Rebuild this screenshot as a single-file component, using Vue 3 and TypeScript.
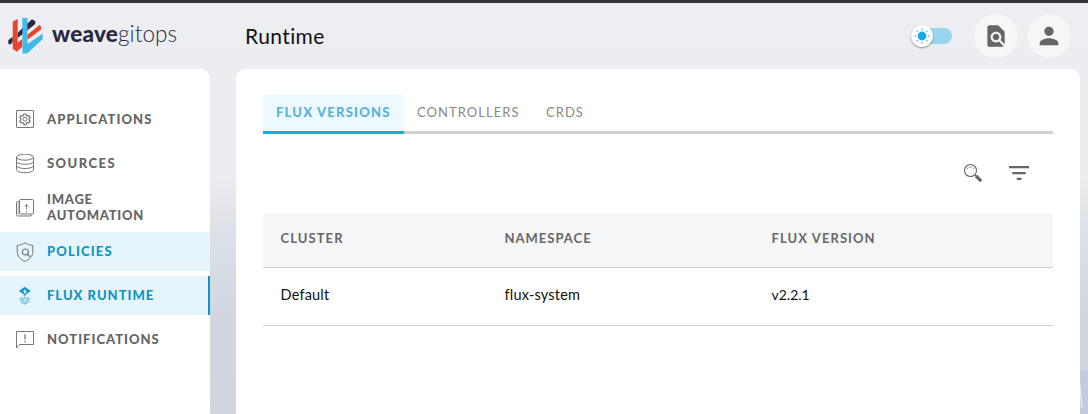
<script setup lang="ts">
interface NavItem {
  id: string
  label: string
  state?: 'hover' | 'active'
}

const navItems: NavItem[] = [
  { id: 'applications', label: 'APPLICATIONS' },
  { id: 'sources', label: 'SOURCES' },
  { id: 'image', label: 'IMAGE AUTOMATION' },
  { id: 'policies', label: 'POLICIES', state: 'hover' },
  { id: 'flux', label: 'FLUX RUNTIME', state: 'active' },
  { id: 'notifications', label: 'NOTIFICATIONS' },
]

const tabs = [
  { id: 'versions', label: 'FLUX VERSIONS', active: true },
  { id: 'controllers', label: 'CONTROLLERS', active: false },
  { id: 'crds', label: 'CRDS', active: false },
]

const columns = [
  { id: 'cluster', label: 'CLUSTER' },
  { id: 'namespace', label: 'NAMESPACE' },
  { id: 'version', label: 'FLUX VERSION' },
]
const rows = [{ cluster: 'Default', namespace: 'flux-system', version: 'v2.2.1' }]
</script>

<template>
  <div class="app">
    <header class="topbar">
      <div class="brand">
        <svg class="mark" width="36" height="38" viewBox="0 0 36 38">
          <path fill="#2a2840" d="M.3 23.200 4.700 19.800V25L2 27.800.3 26.500zM9.700 15.800 24 2.200 27.300 4.200V7L9.700 21z" />
          <path fill="#e8452c" d="M4.700 4.600 9.700 2V25.500L14.300 22V30L8.700 34.700 4.700 31.800zM19.500 17.800 31.500 8 33 9.500V12.500L19.500 22.800z" />
          <path fill="#45b8e8" d="M14.400 1H19.500V27L34.700 16.500V22L19.200 36.500H14.400z" />
        </svg>
        <span class="word"><b>weave</b><span class="light">gitops</span></span>
      </div>
      <h1>Runtime</h1>
      <div class="tools">
        <span class="switch"><span class="thumb">
          <svg width="16" height="16" viewBox="0 0 16 16">
            <circle cx="8" cy="8" r="4.400" fill="#14aeeb" />
            <path stroke="#4fc1ec" stroke-width="1.400" d="M8 .5v1.500M8 14v1.500M.5 8H2M14 8h1.500M2.700 2.700l1 1M12.300 12.300l1 1M2.700 13.300l1-1M12.300 3.700l1-1" />
          </svg>
        </span></span>
        <span class="round">
          <svg width="26" height="26" viewBox="0 0 24 24" fill="#666"><path d="M20 19.59V8l-6-6H6c-1.1 0-1.99.9-1.99 2L4 20c0 1.1.89 2 1.99 2H18c.45 0 .85-.15 1.19-.4l-4.43-4.43c-.8.52-1.74.83-2.76.83-2.76 0-5-2.24-5-5s2.24-5 5-5 5 2.24 5 5c0 1.02-.31 1.96-.83 2.75L20 19.59zM9 13c0 1.66 1.34 3 3 3s3-1.34 3-3-1.34-3-3-3-3 1.34-3 3z" /></svg>
        </span>
        <span class="round user">
          <svg width="28" height="28" viewBox="0 0 24 24" fill="#666"><path d="M12 12c2.21 0 4-1.79 4-4s-1.79-4-4-4-4 1.79-4 4 1.79 4 4 4zm0 2c-2.67 0-8 1.34-8 4v2h16v-2c0-2.66-5.33-4-8-4z" /></svg>
        </span>
      </div>
    </header>

    <div class="body">
      <nav class="sidebar">
        <a v-for="item in navItems" :key="item.id" class="nav-item" :class="[item.id, item.state]">
          <svg class="nav-icon" width="20" height="20" viewBox="0 0 20 20" fill="none" stroke="#777" stroke-width="1">
            <template v-if="item.id === 'applications'">
              <rect x="1.500" y=".5" width="17" height="17" rx=".5" />
              <g transform="translate(0 -1)">
                <path stroke-width="1.200" d="M8.900 5h2.200l.4 1.500 1.100.6 1.500-.4 1.100 1.900-1.100 1.100v1.200l1.100 1.100-1.100 1.900-1.500-.4-1.100.6-.4 1.500H8.900l-.4-1.500-1.100-.6-1.500.4L4.800 12l1.100-1.100V9.700L4.800 8.600l1.100-1.900 1.500.4 1.100-.6z" />
                <circle cx="10" cy="10.200" r="2" />
              </g>
            </template>
            <template v-else-if="item.id === 'sources'">
              <ellipse cx="10" cy="3.200" rx="8.500" ry="3" />
              <path d="M1.500 3.200v12.500c0 1.700 3.800 3 8.500 3s8.500-1.300 8.500-3V3.200M1.500 7.300c0 1.700 3.800 3 8.500 3s8.500-1.300 8.500-3M1.500 11.500c0 1.700 3.800 3 8.500 3s8.500-1.300 8.500-3" />
            </template>
            <template v-else-if="item.id === 'image'">
              <rect x="4.500" y="1.500" width="14" height="14.500" rx="1" />
              <path d="M4 3.500H2.500q-1 0-1 1v12.200q0 1.300 1.300 1.300H15q1.500 0 2-1.500" />
              <path stroke="#aaa" d="M3.200 4v12.500" />
              <path stroke-width=".9" d="M11.500 6.500v5M11.500 13v1.500M9.500 8.500l2-2 2 2" />
            </template>
            <template v-else-if="item.id === 'policies'">
              <path d="M10 .7c2.300 1.800 5 2.500 7.800 2.600v6.200c0 4.800-3.300 8.100-7.800 9.900-4.500-1.800-7.800-5.100-7.800-9.900V3.300C5 3.200 7.700 2.500 10 .7z" />
              <circle cx="10.300" cy="10" r="3" stroke-width="1.200" />
              <path stroke-width="1.300" d="M12.500 12.200l2.600 2.800" />
            </template>
            <template v-else-if="item.id === 'flux'">
              <path fill="#1299c8" stroke="none" fill-rule="evenodd" d="M9.800.8 15.800 4.900 11 8.300V9.500H8.700V8.300L3.900 4.900zM9.800 3.600 7.800 5.800H9V7.500H10.700V5.800H11.900z" />
              <path stroke="#6fc2de" stroke-width="1.200" d="M4.300 13.300 7.500 11.300M15.300 13.300 12 11.300M6.500 13.800 9.800 12l3.300 1.800-3.300 2zM5 15.300l4.800 2.700 4.800-2.700M9.800 10.300v1.500" />
            </template>
            <template v-else>
              <path d="M1.500 18V1.500h17v13H4.500z" />
              <path stroke-width="1.300" d="M10 4.200v5.200M10 11v1.300" />
            </template>
          </svg>
          <span class="nav-label">{{ item.label }}</span>
        </a>
      </nav>

      <main class="panel">
        <div class="tabs">
          <button v-for="tab in tabs" :key="tab.id" class="tab" :class="[tab.id, { selected: tab.active }]">{{ tab.label }}</button>
        </div>
        <div class="actions">
          <svg width="20" height="20" viewBox="0 0 20 20" fill="none" stroke="#666">
            <circle cx="7.500" cy="7.500" r="6" stroke-width="1.100" />
            <path stroke-width=".8" stroke-dasharray="2 1" d="M4 6q1-2 3.500-2T11 6" />
            <path stroke-width="1.200" d="M11.700 11.700l2 2" />
            <path stroke-width="3.200" d="M13 13l5.200 5.200" />
          </svg>
          <svg width="20" height="20" viewBox="0 0 20 20" fill="#666">
            <path d="M0 3h20v2.200H0zM3.300 9h13.400v2.200H3.300zM7.800 14.700h4.600v2.200H7.800z" />
          </svg>
        </div>
        <table>
          <thead>
            <tr><th v-for="col in columns" :key="col.id" :class="col.id">{{ col.label }}</th></tr>
          </thead>
          <tbody>
            <tr v-for="row in rows" :key="row.cluster">
              <td class="wide">{{ row.cluster }}</td>
              <td class="wide">{{ row.namespace }}</td>
              <td>{{ row.version }}</td>
            </tr>
          </tbody>
        </table>
      </main>
      <div class="scenery">
        <svg width="8" height="44" viewBox="0 0 8 44"><path fill="#c3cbdc" d="M0 0h8v44H0z" /><path fill="#f1f4f8" d="M0 11 2.500 38H1.500L0 24z" /></svg>
      </div>
    </div>
  </div>
</template>

<style>
body { margin: 0; overflow: hidden; }
</style>

<style scoped>
.app {
  box-sizing: border-box;
  width: 1088px;
  height: 414px;
  overflow: hidden;
  border-top: 3px solid #363636;
  background: linear-gradient(180deg, #eceef2 0, #ebecf0 175px, #dfe2e8 220px, #d1d6e1 310px, #d0d5e1 411px);
  font-family: Lato, "Open Sans", sans-serif;
  color: #111;
}
.topbar { display: flex; align-items: center; height: 66px; }
.brand { display: flex; align-items: center; width: 245px; }
.mark { margin-left: 8px; }
.word { margin-left: 8px; font-size: 22.500px; line-height: 30px; color: #2a2840; margin-bottom: 4px; }
.word b { font-weight: 900; letter-spacing: .2px; }
.light { font-weight: 300; letter-spacing: .1px; }
h1 { margin: 0 0 1px; font-size: 21px; font-weight: 400; line-height: 24px; letter-spacing: .4px; }
.tools { display: flex; align-items: center; margin-left: auto; padding-right: 17px; }
.switch { display: flex; align-items: center; width: 39px; height: 16px; margin-right: 22px; border-radius: 8px; background: #98d5ee; }
.thumb { display: flex; align-items: center; justify-content: center; flex: none; width: 22px; height: 22px; margin-left: -2px; border-radius: 50%; background: #fff; box-shadow: 0 1px 2px rgba(0, 0, 0, .4); }
.round { display: flex; align-items: center; justify-content: center; width: 44px; height: 44px; border-radius: 50%; background: #f5f6f8; }
.user { margin-left: 9px; }
.body { display: flex; height: 345px; }
.sidebar { box-sizing: border-box; width: 210px; padding-top: 31px; border-radius: 0 10px 0 0; background: #fff; }
.nav-item { box-sizing: border-box; display: flex; align-items: center; height: 39px; margin-bottom: 5px; padding-left: 15px; color: #656565; }
.nav-icon { flex: none; }
.nav-label { width: 120px; margin: 0 0 1px 12px; font-size: 13px; font-weight: 900; line-height: 16px; letter-spacing: 1.080px; }
.sources .nav-label { letter-spacing: 1.450px; }
.image .nav-label { letter-spacing: .75px; }
.policies .nav-label { letter-spacing: 1.150px; }
.flux .nav-label, .notifications .nav-label { letter-spacing: 1px; }
.hover, .active { background: #e6f5fc; color: #1095c4; }
.active { border-right: 2px solid #1095c4; }
.panel { box-sizing: border-box; width: 844px; margin-left: 26px; padding: 26px 27px 0; border-radius: 10px 10px 0 0; background: #fff; }
.tabs { display: flex; height: 36px; border-bottom: 3px solid #d0d0d0; }
.tab { box-sizing: border-box; height: 39px; padding: 0 0 4px 13px; border: 0; background: transparent; text-align: left; font: 400 13px/35px Lato, sans-serif; letter-spacing: 1.050px; color: #888; white-space: nowrap; }
.tab.versions { width: 141px; letter-spacing: 1.200px; }
.tab.controllers { width: 129px; }
.tab.selected { background: #eef9ff; border-bottom: 3px solid #14abe6; padding-bottom: 1px; font-weight: 900; color: #55b4d8; }
.actions { display: flex; justify-content: flex-end; gap: 26px; margin: 29px 24px 30px 0; height: 20px; }
table { width: 790px; table-layout: fixed; border-collapse: separate; border-spacing: 0; }
th, td { box-sizing: border-box; padding: 0 0 0 17.500px; text-align: left; border-bottom: 1px solid #d0d0d0; }
th { height: 55px; padding-bottom: 4px; background: #f5f6f8; font-size: 13px; font-weight: 700; letter-spacing: 1.080px; color: #686868; }
th.cluster { width: 224px; border-top-left-radius: 4px; }
th.namespace { width: 267px; letter-spacing: 1px; }
th.version { border-top-right-radius: 4px; }
td { height: 58px; padding-bottom: 4px; font-size: 14px; }
td.wide { font-size: 14.500px; letter-spacing: .2px; }
.scenery { align-self: flex-end; height: 44px; }
.scenery svg { display: block; }
</style>
